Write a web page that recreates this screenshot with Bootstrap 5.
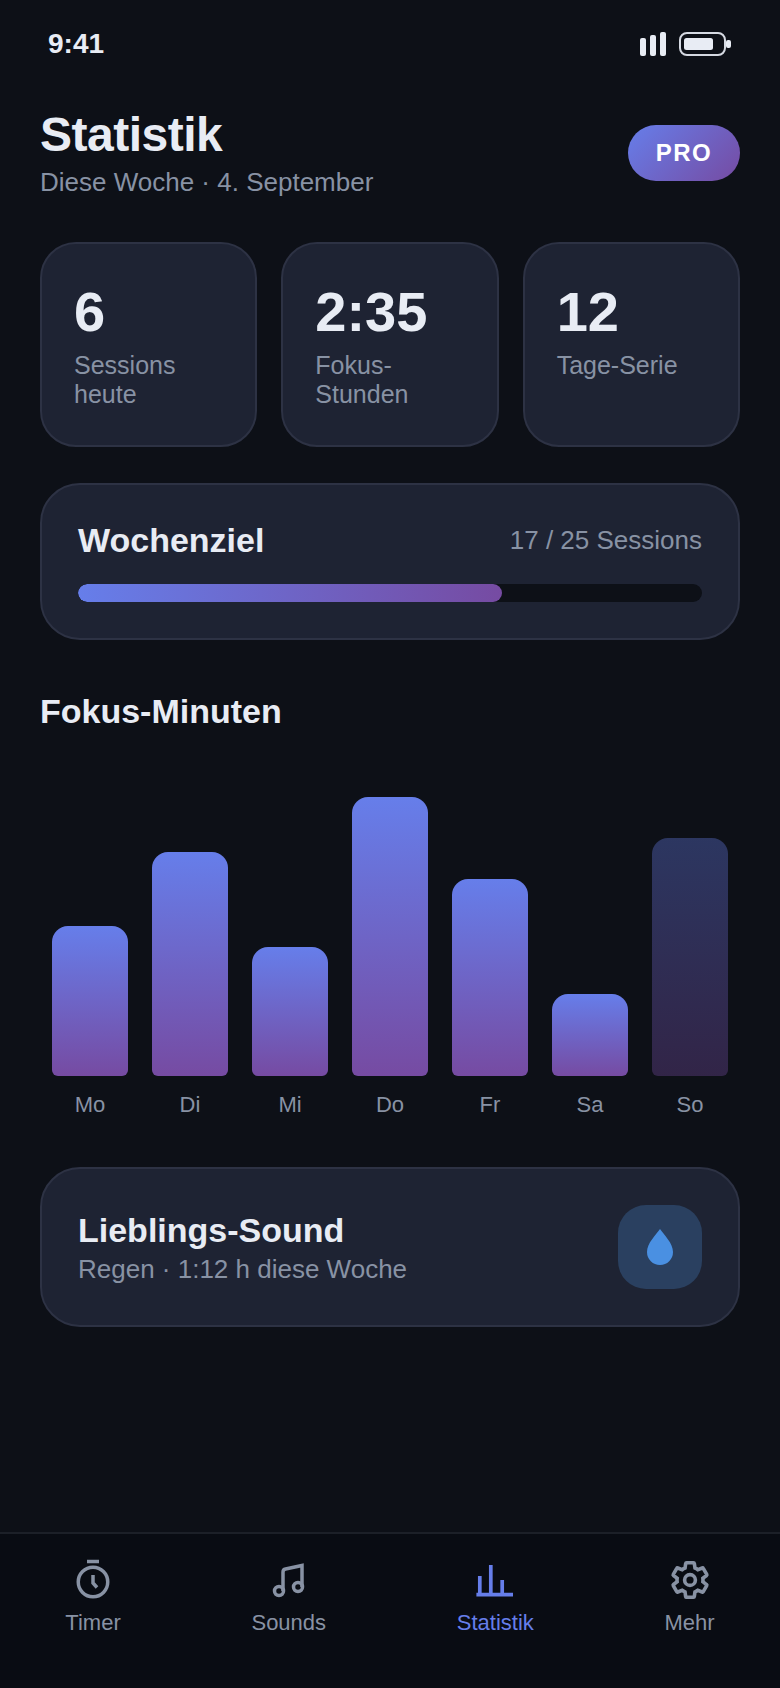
<!DOCTYPE html>
<html lang="de">
<head>
    <meta charset="UTF-8">
    <meta name="viewport" content="width=device-width, initial-scale=1.0">
    <title>Statistik</title>
    <link href="https://cdn.jsdelivr.net/npm/bootstrap@5.3.0/dist/css/bootstrap.min.css" rel="stylesheet">
    <style>
        body {
            background-color: #0d1017;
            font-family: "Liberation Sans", Arial, sans-serif;
            color: #e8ecf4;
        }
        .app-screen {
            width: 780px;
            height: 1688px;
        }
        .status-bar {
            height: 44px;
            margin-top: 22px;
            padding: 0 48px;
        }
        .status-time {
            font-size: 28px;
            font-weight: 700;
            line-height: 44px;
        }
        .status-icons {
            gap: 13px;
        }
        .content-area {
            padding: 0 40px;
        }
        .page-head {
            margin-top: 41px;
        }
        .page-title {
            font-size: 48px;
            font-weight: 700;
            letter-spacing: -.5px;
            line-height: 56px;
            margin: 0;
        }
        .page-sub {
            font-size: 26px;
            line-height: 32px;
            color: #8892a4;
            margin-top: 3px;
        }
        .pro-pill {
            width: 112px;
            height: 56px;
            border-radius: 28px;
            background: linear-gradient(135deg, #667eea, #764ba2);
            color: #fff;
            font-size: 24px;
            font-weight: 700;
            letter-spacing: 1.5px;
        }
        .stat-row {
            margin-top: 44px;
            gap: 24px;
        }
        .panel-box {
            background-color: #1e2333;
            border: 2px solid #2d3244;
        }
        .stat-box {
            flex: 1 1 0;
            height: 205px;
            border-radius: 36px;
            padding: 36px 32px 0;
        }
        .stat-value {
            font-size: 56px;
            font-weight: 700;
            line-height: 64px;
        }
        .stat-label {
            font-size: 25px;
            line-height: 29px;
            color: #8892a4;
            margin-top: 7px;
        }
        .goal-box {
            margin-top: 36px;
            height: 157px;
            border-radius: 40px;
            padding: 35px 36px 0;
        }
        .box-title {
            font-size: 34px;
            font-weight: 700;
            line-height: 40px;
        }
        .goal-count {
            font-size: 26px;
            color: #8892a4;
        }
        .goal-track {
            height: 18px;
            margin-top: 24px;
            border-radius: 9px;
            background-color: #0d1017;
            overflow: hidden;
        }
        .goal-fill {
            height: 100%;
            border-radius: 9px;
            background: linear-gradient(90deg, #667eea, #764ba2);
        }
        .chart-title {
            font-size: 34px;
            font-weight: 700;
            line-height: 44px;
            margin-top: 49px;
        }
        .chart-area {
            height: 387px;
            padding: 0 12px;
            gap: 24px;
        }
        .chart-col {
            flex: 1 1 0;
        }
        .chart-bar {
            border-radius: 16px 16px 6px 6px;
            background: linear-gradient(180deg, #667eea, #764ba2);
        }
        .chart-bar.is-today {
            opacity: .35;
        }
        .chart-day {
            font-size: 22px;
            line-height: 30px;
            color: #8892a4;
            margin-top: 14px;
            text-align: center;
        }
        .sound-box {
            margin-top: 47px;
            height: 160px;
            border-radius: 40px;
            padding: 0 36px;
        }
        .sound-sub {
            font-size: 26px;
            color: #8892a4;
            line-height: 32px;
            margin-top: 3px;
        }
        .sound-tile {
            width: 84px;
            height: 84px;
            border-radius: 28px;
            background-color: #2a4060;
        }
        .tab-bar {
            height: 156px;
            background-color: #090c13;
            border-top: 2px solid #1c2028;
            padding-top: 24px;
        }
        .tab-item {
            color: #8892a4;
            font-size: 22px;
            line-height: 30px;
            gap: 6px;
        }
        .tab-item.is-active {
            color: #667eea;
        }
    </style>
</head>
<body>
    <div class="app-screen d-flex flex-column overflow-hidden">
        <div class="status-bar d-flex justify-content-between align-items-center flex-shrink-0">
            <div class="status-time">9:41</div>
            <div class="status-icons d-flex align-items-center">
                <svg width="26" height="24" viewBox="0 0 26 24" fill="#e8ecf4">
                    <rect x="0" y="6" width="6" height="18" rx="2"/>
                    <rect x="10" y="3" width="6" height="21" rx="2"/>
                    <rect x="20" y="0" width="6" height="24" rx="2"/>
                </svg>
                <svg width="53" height="24" viewBox="0 0 53 24">
                    <rect x="1" y="1" width="45" height="22" rx="7" fill="none" stroke="#d5d9e2" stroke-width="2"/>
                    <rect x="5" y="6" width="29" height="12" rx="2.5" fill="#e8ecf4"/>
                    <rect x="47" y="8" width="5" height="8" rx="2" fill="#e8ecf4"/>
                </svg>
            </div>
        </div>

        <div class="content-area">
            <div class="page-head d-flex justify-content-between align-items-center">
                <div>
                    <h1 class="page-title">Statistik</h1>
                    <div class="page-sub">Diese Woche · 4. September</div>
                </div>
                <div class="pro-pill d-flex align-items-center justify-content-center">PRO</div>
            </div>

            <div class="stat-row d-flex">
                <div class="stat-box panel-box">
                    <div class="stat-value">6</div>
                    <div class="stat-label">Sessions heute</div>
                </div>
                <div class="stat-box panel-box">
                    <div class="stat-value">2:35</div>
                    <div class="stat-label">Fokus-Stunden</div>
                </div>
                <div class="stat-box panel-box">
                    <div class="stat-value">12</div>
                    <div class="stat-label">Tage-Serie</div>
                </div>
            </div>

            <div class="goal-box panel-box">
                <div class="d-flex justify-content-between align-items-center">
                    <div class="box-title">Wochenziel</div>
                    <div class="goal-count">17 / 25 Sessions</div>
                </div>
                <div class="goal-track">
                    <div class="goal-fill" style="width: 68%"></div>
                </div>
            </div>

            <div class="chart-title">Fokus-Minuten</div>
            <div class="chart-area d-flex">
                <div class="chart-col d-flex flex-column justify-content-end">
                    <div class="chart-bar" style="height: 150px"></div>
                    <div class="chart-day">Mo</div>
                </div>
                <div class="chart-col d-flex flex-column justify-content-end">
                    <div class="chart-bar" style="height: 224px"></div>
                    <div class="chart-day">Di</div>
                </div>
                <div class="chart-col d-flex flex-column justify-content-end">
                    <div class="chart-bar" style="height: 129px"></div>
                    <div class="chart-day">Mi</div>
                </div>
                <div class="chart-col d-flex flex-column justify-content-end">
                    <div class="chart-bar" style="height: 279px"></div>
                    <div class="chart-day">Do</div>
                </div>
                <div class="chart-col d-flex flex-column justify-content-end">
                    <div class="chart-bar" style="height: 197px"></div>
                    <div class="chart-day">Fr</div>
                </div>
                <div class="chart-col d-flex flex-column justify-content-end">
                    <div class="chart-bar" style="height: 82px"></div>
                    <div class="chart-day">Sa</div>
                </div>
                <div class="chart-col d-flex flex-column justify-content-end">
                    <div class="chart-bar is-today" style="height: 238px"></div>
                    <div class="chart-day">So</div>
                </div>
            </div>

            <div class="sound-box panel-box d-flex justify-content-between align-items-center">
                <div>
                    <div class="box-title">Lieblings-Sound</div>
                    <div class="sound-sub">Regen · 1:12 h diese Woche</div>
                </div>
                <div class="sound-tile d-flex align-items-center justify-content-center">
                    <svg width="26" height="36" viewBox="0 0 26 36">
                        <path d="M13 0 C9 6 0 14 0 23 A13 13 0 0 0 26 23 C26 14 17 6 13 0 Z" fill="#4a90e2"/>
                    </svg>
                </div>
            </div>
        </div>

        <div class="tab-bar d-flex justify-content-around align-items-start mt-auto flex-shrink-0">
            <div class="tab-item d-flex flex-column align-items-center">
                <svg width="44" height="44" viewBox="0 0 44 44" fill="none" stroke="currentColor" stroke-width="3.5">
                    <path d="M16 3.5 H28"/>
                    <circle cx="22" cy="24" r="14.75"/>
                    <path d="M22 17 V25 L26 29.5"/>
                </svg>
                <span>Timer</span>
            </div>
            <div class="tab-item d-flex flex-column align-items-center">
                <svg width="44" height="44" viewBox="0 0 44 44" fill="none" stroke="currentColor" stroke-width="3.5">
                    <path d="M16 33 V14 Q16 11.5 18.5 11 L35 7.5 V29"/>
                    <circle cx="12" cy="33" r="4.5"/>
                    <circle cx="31" cy="29" r="4.5"/>
                </svg>
                <span>Sounds</span>
            </div>
            <div class="tab-item is-active d-flex flex-column align-items-center">
                <svg width="44" height="44" viewBox="0 0 44 44" fill="none" stroke="currentColor" stroke-width="3.7">
                    <path d="M3.4 36.7 H40"/>
                    <path d="M6.8 36.7 V18 M17.8 36.7 V7 M29.2 36.7 V22"/>
                </svg>
                <span>Statistik</span>
            </div>
            <div class="tab-item d-flex flex-column align-items-center">
                <svg width="44" height="44" viewBox="-0.2 -0.2 24.4 24.4" fill="none" stroke="currentColor" stroke-width="2">
                    <circle cx="12" cy="12" r="3"/>
                    <path d="M19.14 12.94c.04-.3.06-.61.06-.94 0-.32-.02-.64-.07-.94l2.03-1.58c.18-.14.23-.41.12-.61l-1.92-3.32c-.12-.22-.37-.29-.59-.22l-2.39.96c-.5-.38-1.03-.7-1.62-.94l-.36-2.54c-.04-.24-.24-.41-.48-.41h-3.84c-.24 0-.43.17-.47.41l-.36 2.54c-.59.24-1.13.57-1.62.94l-2.39-.96c-.22-.08-.47 0-.59.22L2.74 8.87c-.12.21-.08.47.12.61l2.03 1.58c-.05.3-.09.63-.09.94s.02.64.07.94l-2.03 1.58c-.18.14-.23.41-.12.61l1.92 3.32c.12.22.37.29.59.22l2.39-.96c.5.38 1.03.7 1.62.94l.36 2.54c.05.24.24.41.48.41h3.84c.24 0 .44-.17.47-.41l.36-2.54c.59-.24 1.13-.56 1.62-.94l2.39.96c.22.08.47 0 .59-.22l1.92-3.32c.12-.22.07-.47-.12-.61l-2.01-1.58z"/>
                </svg>
                <span>Mehr</span>
            </div>
        </div>
    </div>
    <script src="https://cdn.jsdelivr.net/npm/bootstrap@5.3.0/dist/js/bootstrap.bundle.min.js"></script>
</body>
</html>
